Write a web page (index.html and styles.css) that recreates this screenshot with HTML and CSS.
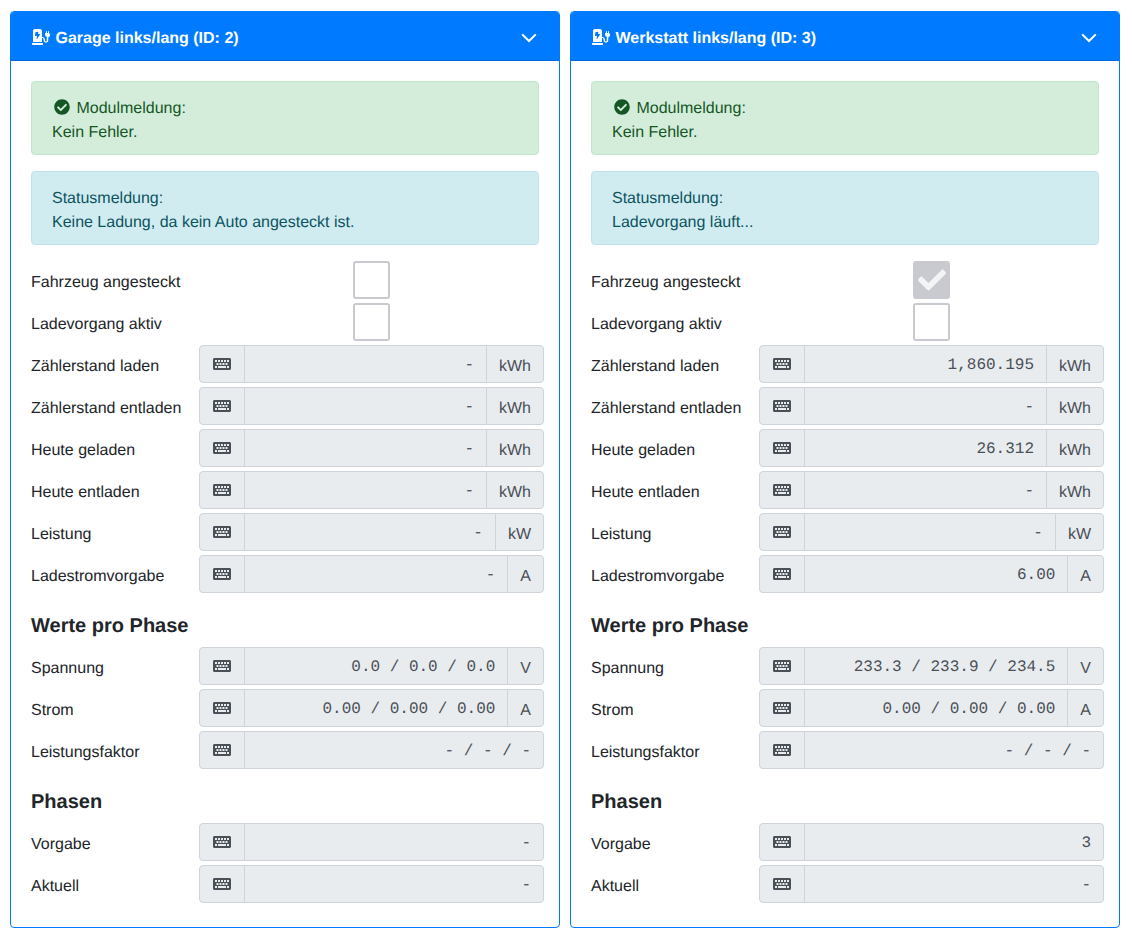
FILE: index.html
```html
<!DOCTYPE html>
<html lang="de">
<head>
<meta charset="utf-8">
<title>Ladepunkte</title>
<link rel="stylesheet" href="styles.css">
</head>
<body>
<svg class="sprite" aria-hidden="true">
  <defs>
    <symbol id="i-station" viewBox="0 0 576 512"><path d="M336 448H16c-8.84 0-16 7.16-16 16v32c0 8.84 7.16 16 16 16h320c8.84 0 16-7.16 16-16v-32c0-8.84-7.16-16-16-16zm208-320V80c0-8.84-7.16-16-16-16s-16 7.16-16 16v48h-32V80c0-8.84-7.16-16-16-16s-16 7.16-16 16v48h-16c-8.84 0-16 7.16-16 16v32c0 35.76 23.62 65.69 56 75.93v118.49c0 13.95-9.5 26.95-23.26 29.22C431.22 402.5 416 388.99 416 372v-28c0-48.6-39.4-88-88-88h-8V64c0-35.35-28.65-64-64-64H96C60.65 0 32 28.65 32 64v352h288V288h8c22.09 0 40 17.91 40 40v24.61c0 39.67 28.92 75.16 68.41 79.01C481.71 436.03 520 401.39 520 356v-88.07c32.38-10.24 56-40.17 56-75.93v-32c0-8.84-7.16-16-16-16h-16zm-283.91 47.76l-93.7 139c-2.2 3.33-6.21 5.24-10.39 5.24-7.67 0-13.47-6.28-11.67-12.92L167.35 224H108c-7.25 0-12.85-5.59-11.89-11.89l16-107C112.9 99.9 117.98 96 124 96h68c7.88 0 13.62 6.54 11.6 13.21L192 160h57.7c9.24 0 15.01 8.78 10.39 15.76z"/></symbol>
    <symbol id="i-chevron" viewBox="0 0 16 10"><path d="M1.2 1.4L8 8l6.8-6.6" fill="none" stroke="currentColor" stroke-width="2"/></symbol>
    <symbol id="i-circle" viewBox="0 0 512 512"><path d="M504 256c0 136.967-111.033 248-248 248S8 392.967 8 256 119.033 8 256 8s248 111.033 248 248zM227.314 387.314l184-184c6.248-6.248 6.248-16.379 0-22.627l-22.627-22.627c-6.248-6.249-16.379-6.249-22.628 0L216 308.118l-70.059-70.059c-6.248-6.248-16.379-6.248-22.628 0l-22.627 22.627c-6.248 6.248-6.248 16.379 0 22.627l104 104c6.249 6.249 16.379 6.249 22.628 0z"/></symbol>
    <symbol id="i-check" viewBox="0 0 512 512"><path d="M173.898 439.404l-166.4-166.4c-9.997-9.997-9.997-26.206 0-36.204l36.203-36.204c9.997-9.998 26.207-9.998 36.204 0L192 312.69 432.095 72.596c9.997-9.997 26.207-9.997 36.204 0l36.203 36.204c9.997 9.997 9.997 26.206 0 36.204l-294.4 294.401c-9.998 9.997-26.207 9.997-36.204-.001z"/></symbol>
    <symbol id="i-keyboard" viewBox="0 0 576 512"><path fill-rule="evenodd" d="M528 448H48c-26.51 0-48-21.49-48-48V112c0-26.51 21.49-48 48-48h480c26.51 0 48 21.49 48 48v288c0 26.51-21.49 48-48 48zM64 128v64h64v-64zm96 0v64h64v-64zm96 0v64h64v-64zm96 0v64h64v-64zm96 0v64h64v-64zM112 224v64h64v-64zm96 0v64h64v-64zm96 0v64h64v-64zm96 0v64h64v-64zM64 320v64h64v-64zm96 0v64h256v-64zm288 0v64h64v-64z"/></symbol>
  </defs>
</svg>
<main class="deck">

  <section class="card">
    <header class="card-head">
      <span class="card-title"><svg class="ico-station"><use href="#i-station"/></svg> Garage links/lang (ID: 2)</span>
      <svg class="ico-chevron"><use href="#i-chevron"/></svg>
    </header>
    <div class="card-body">
      <div class="alert alert-ok"><svg class="ico-ok"><use href="#i-circle"/></svg> Modulmeldung:<br>Kein Fehler.</div>
      <div class="alert alert-info">Statusmeldung:<br>Keine Ladung, da kein Auto angesteckt ist.</div>

      <div class="row"><span class="lbl">Fahrzeug angesteckt</span><span class="toggle-cell"><span class="toggle"></span></span></div>
      <div class="row"><span class="lbl">Ladevorgang aktiv</span><span class="toggle-cell"><span class="toggle"></span></span></div>
      <div class="row"><span class="lbl">Zählerstand laden</span><div class="group"><span class="addon-icon"><svg class="ico-kb"><use href="#i-keyboard"/></svg></span><span class="value">-</span><span class="unit">kWh</span></div></div>
      <div class="row"><span class="lbl">Zählerstand entladen</span><div class="group"><span class="addon-icon"><svg class="ico-kb"><use href="#i-keyboard"/></svg></span><span class="value">-</span><span class="unit">kWh</span></div></div>
      <div class="row"><span class="lbl">Heute geladen</span><div class="group"><span class="addon-icon"><svg class="ico-kb"><use href="#i-keyboard"/></svg></span><span class="value">-</span><span class="unit">kWh</span></div></div>
      <div class="row"><span class="lbl">Heute entladen</span><div class="group"><span class="addon-icon"><svg class="ico-kb"><use href="#i-keyboard"/></svg></span><span class="value">-</span><span class="unit">kWh</span></div></div>
      <div class="row"><span class="lbl">Leistung</span><div class="group"><span class="addon-icon"><svg class="ico-kb"><use href="#i-keyboard"/></svg></span><span class="value">-</span><span class="unit">kW</span></div></div>
      <div class="row"><span class="lbl">Ladestromvorgabe</span><div class="group"><span class="addon-icon"><svg class="ico-kb"><use href="#i-keyboard"/></svg></span><span class="value">-</span><span class="unit">A</span></div></div>

      <h2 class="section-title">Werte pro Phase</h2>
      <div class="row"><span class="lbl">Spannung</span><div class="group"><span class="addon-icon"><svg class="ico-kb"><use href="#i-keyboard"/></svg></span><span class="value">0.0 / 0.0 / 0.0</span><span class="unit">V</span></div></div>
      <div class="row"><span class="lbl">Strom</span><div class="group"><span class="addon-icon"><svg class="ico-kb"><use href="#i-keyboard"/></svg></span><span class="value">0.00 / 0.00 / 0.00</span><span class="unit">A</span></div></div>
      <div class="row"><span class="lbl">Leistungsfaktor</span><div class="group"><span class="addon-icon"><svg class="ico-kb"><use href="#i-keyboard"/></svg></span><span class="value">- / - / -</span></div></div>

      <h2 class="section-title">Phasen</h2>
      <div class="row"><span class="lbl">Vorgabe</span><div class="group"><span class="addon-icon"><svg class="ico-kb"><use href="#i-keyboard"/></svg></span><span class="value">-</span></div></div>
      <div class="row"><span class="lbl">Aktuell</span><div class="group"><span class="addon-icon"><svg class="ico-kb"><use href="#i-keyboard"/></svg></span><span class="value">-</span></div></div>
    </div>
  </section>

  <section class="card">
    <header class="card-head">
      <span class="card-title"><svg class="ico-station"><use href="#i-station"/></svg> Werkstatt links/lang (ID: 3)</span>
      <svg class="ico-chevron"><use href="#i-chevron"/></svg>
    </header>
    <div class="card-body">
      <div class="alert alert-ok"><svg class="ico-ok"><use href="#i-circle"/></svg> Modulmeldung:<br>Kein Fehler.</div>
      <div class="alert alert-info">Statusmeldung:<br>Ladevorgang läuft...</div>

      <div class="row"><span class="lbl">Fahrzeug angesteckt</span><span class="toggle-cell"><span class="toggle toggle-on"><svg class="ico-check"><use href="#i-check"/></svg></span></span></div>
      <div class="row"><span class="lbl">Ladevorgang aktiv</span><span class="toggle-cell"><span class="toggle"></span></span></div>
      <div class="row"><span class="lbl">Zählerstand laden</span><div class="group"><span class="addon-icon"><svg class="ico-kb"><use href="#i-keyboard"/></svg></span><span class="value">1,860.195</span><span class="unit">kWh</span></div></div>
      <div class="row"><span class="lbl">Zählerstand entladen</span><div class="group"><span class="addon-icon"><svg class="ico-kb"><use href="#i-keyboard"/></svg></span><span class="value">-</span><span class="unit">kWh</span></div></div>
      <div class="row"><span class="lbl">Heute geladen</span><div class="group"><span class="addon-icon"><svg class="ico-kb"><use href="#i-keyboard"/></svg></span><span class="value">26.312</span><span class="unit">kWh</span></div></div>
      <div class="row"><span class="lbl">Heute entladen</span><div class="group"><span class="addon-icon"><svg class="ico-kb"><use href="#i-keyboard"/></svg></span><span class="value">-</span><span class="unit">kWh</span></div></div>
      <div class="row"><span class="lbl">Leistung</span><div class="group"><span class="addon-icon"><svg class="ico-kb"><use href="#i-keyboard"/></svg></span><span class="value">-</span><span class="unit">kW</span></div></div>
      <div class="row"><span class="lbl">Ladestromvorgabe</span><div class="group"><span class="addon-icon"><svg class="ico-kb"><use href="#i-keyboard"/></svg></span><span class="value">6.00</span><span class="unit">A</span></div></div>

      <h2 class="section-title">Werte pro Phase</h2>
      <div class="row"><span class="lbl">Spannung</span><div class="group"><span class="addon-icon"><svg class="ico-kb"><use href="#i-keyboard"/></svg></span><span class="value">233.3 / 233.9 / 234.5</span><span class="unit">V</span></div></div>
      <div class="row"><span class="lbl">Strom</span><div class="group"><span class="addon-icon"><svg class="ico-kb"><use href="#i-keyboard"/></svg></span><span class="value">0.00 / 0.00 / 0.00</span><span class="unit">A</span></div></div>
      <div class="row"><span class="lbl">Leistungsfaktor</span><div class="group"><span class="addon-icon"><svg class="ico-kb"><use href="#i-keyboard"/></svg></span><span class="value">- / - / -</span></div></div>

      <h2 class="section-title">Phasen</h2>
      <div class="row"><span class="lbl">Vorgabe</span><div class="group"><span class="addon-icon"><svg class="ico-kb"><use href="#i-keyboard"/></svg></span><span class="value">3</span></div></div>
      <div class="row"><span class="lbl">Aktuell</span><div class="group"><span class="addon-icon"><svg class="ico-kb"><use href="#i-keyboard"/></svg></span><span class="value">-</span></div></div>
    </div>
  </section>

</main>
</body>
</html>
```
FILE: styles.css
```css
* { box-sizing: border-box; }

html, body { margin: 0; padding: 0; background: #fff; }

body {
  font-family: "Liberation Sans", Arial, sans-serif;
  font-size: 16px;
  line-height: 24px;
  color: #212529;
  text-rendering: geometricPrecision;
}

.sprite { display: none; }

.deck {
  display: flex;
  gap: 10px;
  padding: 11px 12px 7px 10px;
  align-items: flex-start;
}

.card {
  flex: 0 0 550px;
  border: 1px solid #007bff;
  border-radius: 4px;
  background: #fff;
}

.card-head {
  display: flex;
  align-items: center;
  justify-content: space-between;
  height: 49px;
  padding: 6px 20px 0;
  background: #007bff;
  color: #fff;
  border-bottom: 1px solid #0069e0;
  border-radius: 3px 3px 0 0;
}

.card-title { font-weight: 700; font-size: 16px; }

.ico-station { width: 18px; height: 16px; fill: #fff; vertical-align: -2px; margin: 0 1px; }

.ico-chevron { width: 16px; height: 10px; color: #fff; margin: 0 2px 2px 0; }

.card-body { padding: 20px; }

.alert {
  margin-bottom: 16px;
  padding: 15px 20px 9px;
  border: 1px solid transparent;
  border-radius: 4px;
}

.alert-ok { background: #d4edda; border-color: #c3e6cb; color: #155724; }

.alert-info { background: #d1ecf1; border-color: #bee5eb; color: #0c5460; }

.ico-ok { width: 16px; height: 16px; fill: #155724; vertical-align: -2px; margin: 0 2px; }

.row {
  display: grid;
  grid-template-columns: 168px 345px;
  align-items: center;
  height: 38px;
  margin: 0 -5px 4px 0;
}

.lbl { display: block; padding-top: 6px; }

.toggle-cell { display: flex; justify-content: center; }

.toggle {
  display: flex;
  align-items: center;
  justify-content: center;
  width: 37.5px;
  height: 38px;
  border: 2px solid #c9cad0;
  border-radius: 3px;
  background: #fff;
}

.toggle-on { background: #c9cad0; }

.ico-check { width: 28px; height: 28px; fill: #f4f4f6; }

.group {
  display: flex;
  height: 38px;
  border: 1px solid #ced4da;
  border-radius: 4px;
  background: #e9ecef;
  color: #495057;
}

.addon-icon {
  display: flex;
  align-items: center;
  justify-content: center;
  flex: 0 0 45px;
  border-right: 1px solid #ced4da;
}

.ico-kb { width: 18px; height: 16px; fill: #495057; }

.value {
  flex: 1;
  padding: 3px 12px 0;
  text-align: right;
  font-family: "Liberation Mono", "Courier New", monospace;
  font-size: 16px;
  line-height: 32px;
  white-space: pre;
}

.unit {
  padding: 6px 12px 0;
  border-left: 1px solid #ced4da;
  line-height: 30px;
}

.section-title {
  margin: 21px 0 9px;
  font-size: 20px;
  line-height: 24px;
  font-weight: 700;
}
```
